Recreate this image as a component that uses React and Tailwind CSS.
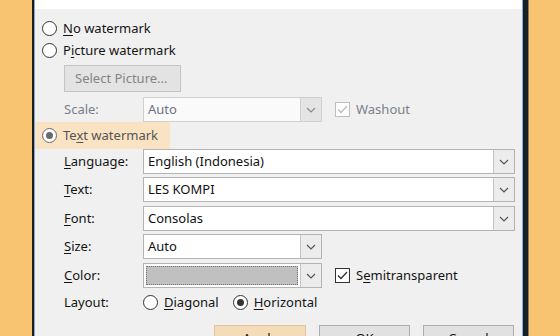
import React from "react";

const F = { fontFamily: '"Noto Sans", "Open Sans", sans-serif' };

function Chevron({ color = "#444" }) {
  return (
    <svg width="10" height="6" viewBox="0 0 10 6">
      <path d="M1 1 L5 5 L9 1" fill="none" stroke={color} strokeWidth="1.2" />
    </svg>
  );
}

function U({ children }) {
  return <span className="underline underline-offset-2">{children}</span>;
}

function Radio({ checked, dim }) {
  const c = dim ? "#6a6a6a" : "#333333";
  return (
    <div
      className="w-[15px] h-[15px] rounded-full bg-white flex items-center justify-center shrink-0"
      style={{ border: `1px solid ${c}` }}
    >
      {checked && <div className="w-[7px] h-[7px] rounded-full" style={{ background: c }} />}
    </div>
  );
}

function Combo({ w, text, disabled, swatch }) {
  return (
    <div
      className={`flex h-full ${w} border ${disabled ? "border-[#cfcfcf] bg-[#fafafa]" : "border-[#b4b4b4] bg-white"}`}
    >
      <div className="flex-1 flex items-center min-w-0">
        {swatch ? (
          <div className="h-full w-full p-[2px]">
            <div className="h-full w-full bg-[#c0c0c0] border border-dotted border-[#6e6e6e]" />
          </div>
        ) : (
          <span className={`pl-[4px] text-[13px] ${disabled ? "text-[#6d7380]" : "text-[#111]"}`}>{text}</span>
        )}
      </div>
      <div
        className={`w-[21px] h-full flex items-center justify-center border-l ${disabled ? "border-[#cfcfcf] bg-[#e4e4e4]" : "border-[#c4c4c4] bg-[#ececec]"}`}
      >
        <Chevron color={disabled ? "#8a8a8a" : "#555"} />
      </div>
    </div>
  );
}

function Check({ checked, disabled }) {
  const c = disabled ? "#bdbdbd" : "#333";
  return (
    <div
      className="w-[15px] h-[15px] bg-white flex items-center justify-center shrink-0"
      style={{ border: `1px solid ${c}` }}
    >
      {checked && (
        <svg width="11" height="9" viewBox="0 0 11 9">
          <path d="M1 4.5 L4 7.5 L10 1" fill="none" stroke={c} strokeWidth="1.3" />
        </svg>
      )}
    </div>
  );
}

export default function App() {
  return (
    <div className="w-[560px] h-[336px] flex overflow-hidden bg-[#f8c471]" style={F}>
      <div className="w-[32px] shrink-0 bg-[#f8c471]" />
      <div className="w-[2px] shrink-0 bg-[#1c1c1c]" />
      <div className="w-px shrink-0 bg-[#7ab0e0]" />
      <div className="w-[487px] shrink-0 flex flex-col overflow-hidden">
        <div className="h-[9px] shrink-0 bg-white" />
        <div className="flex-1 min-h-0 overflow-hidden bg-[#f0f0f0] flex flex-col text-[13px] text-[#141414] leading-none [&>*]:shrink-0">
          <div className="h-[8px]" />
          <div className="h-[22px] flex items-center pl-[7px] gap-[6px]">
            <Radio />
            <span><U>N</U>o watermark</span>
          </div>
          <div className="h-[22px] flex items-center pl-[7px] gap-[6px]">
            <Radio />
            <span>P<U>i</U>cture watermark</span>
          </div>
          <div className="mt-[4px] ml-[29px] w-[117px] h-[27px] bg-[#e3e3e3] border border-[#c4c4c4] flex items-center pl-[10px] text-[#848484]">
            Select Picture...
          </div>
          <div className="mt-[5px] h-[25px] flex items-center">
            <div className="ml-[29px] w-[79px] text-[#7a808a]">Scale:</div>
            <Combo w="w-[179px]" text="Auto" disabled />
            <div className="ml-[13px] flex items-center gap-[6px]">
              <Check checked disabled />
              <span className="text-[#7a808a]">Washout</span>
            </div>
          </div>
          <div className="h-[27px] w-[135px] bg-[#f9e3c3] flex items-center pl-[7px] gap-[6px] text-[#555]">
            <Radio checked dim />
            <span>Te<U>x</U>t watermark</span>
          </div>
          <div className="h-[25px] flex items-center">
            <div className="ml-[29px] w-[79px]"><U>L</U>anguage:</div>
            <Combo w="w-[372px]" text="English (Indonesia)" />
          </div>
          <div className="mt-[3px] h-[25px] flex items-center">
            <div className="ml-[29px] w-[79px]"><U>T</U>ext:</div>
            <Combo w="w-[372px]" text="LES KOMPI" />
          </div>
          <div className="mt-[4px] h-[25px] flex items-center">
            <div className="ml-[29px] w-[79px]"><U>F</U>ont:</div>
            <Combo w="w-[372px]" text="Consolas" />
          </div>
          <div className="mt-[3px] h-[25px] flex items-center">
            <div className="ml-[29px] w-[79px]"><U>S</U>ize:</div>
            <Combo w="w-[179px]" text="Auto" />
          </div>
          <div className="mt-[4px] h-[25px] flex items-center">
            <div className="ml-[29px] w-[79px]"><U>C</U>olor:</div>
            <Combo w="w-[179px]" swatch />
            <div className="ml-[13px] flex items-center gap-[6px]">
              <Check checked />
              <span>S<U>e</U>mitransparent</span>
            </div>
          </div>
          <div className="mt-[2px] h-[24px] flex items-center">
            <div className="ml-[29px] w-[79px]">Layout:</div>
            <div className="flex items-center gap-[6px]">
              <Radio />
              <span><U>D</U>iagonal</span>
            </div>
            <div className="ml-[14px] flex items-center gap-[6px]">
              <Radio checked />
              <span><U>H</U>orizontal</span>
            </div>
          </div>
          <div className="mt-[11px] flex ml-[179px] gap-[13px]">
            <div className="w-[92px] h-[26px] bg-[#f5dcb8] border border-[#e0c49c] flex items-center justify-center">Apply</div>
            <div className="w-[91px] h-[26px] bg-[#e1e1e1] border border-[#adadad] flex items-center justify-center">OK</div>
            <div className="w-[91px] h-[26px] bg-[#e1e1e1] border border-[#adadad] flex items-center justify-center">Cancel</div>
          </div>
        </div>
      </div>
      <div className="w-px shrink-0 bg-[#7ab0e0]" />
      <div className="w-[5px] shrink-0 bg-[#1a1f26]" />
      <div className="w-px shrink-0 bg-[#8c7a58]" />
      <div className="flex-1 bg-[#f8c471]" />
    </div>
  );
}
